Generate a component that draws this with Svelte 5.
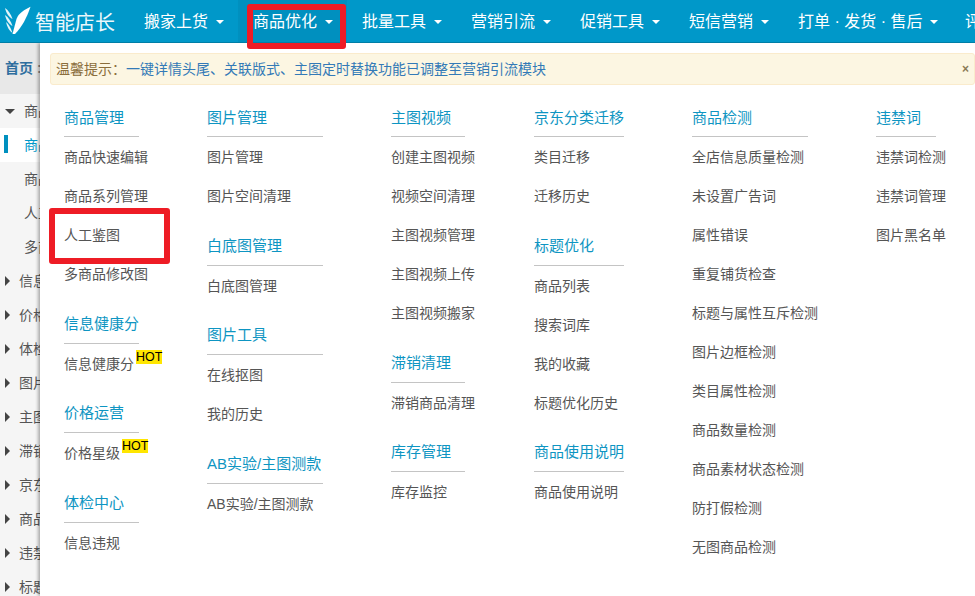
<script lang="ts">
  const navItems = ['搬家上货', '商品优化', '批量工具', '营销引流', '促销工具', '短信营销', '打单 · 发货 · 售后'];

  const sideTop = [
    { label: '商品优化', open: true, child: false },
    { label: '商品快速编辑', active: true, child: true },
    { label: '商品系列管理', child: true },
    { label: '人工鉴图', child: true },
    { label: '多商品修改图', child: true }
  ];
  const sideRest = ['信息健康分', '价格运营', '体检中心', '图片管理', '主图视频', '滞销清理', '京东分类迁移', '商品使用说明', '违禁词', '标题优化'];

  type Group = { title: string; items: (string | { name: string; hot: boolean })[] };
  // line: width of the rule under the titles, shared by the whole column
  const columns: { width: number; line: number; groups: Group[] }[] = [
    {
      width: 143,
      line: 75,
      groups: [
        { title: '商品管理', items: ['商品快速编辑', '商品系列管理', '人工鉴图', '多商品修改图'] },
        { title: '信息健康分', items: [{ name: '信息健康分', hot: true }] },
        { title: '价格运营', items: [{ name: '价格星级', hot: true }] },
        { title: '体检中心', items: ['信息违规'] }
      ]
    },
    {
      width: 184,
      line: 116,
      groups: [
        { title: '图片管理', items: ['图片管理', '图片空间清理'] },
        { title: '白底图管理', items: ['白底图管理'] },
        { title: '图片工具', items: ['在线抠图', '我的历史'] },
        { title: 'AB实验/主图测款', items: ['AB实验/主图测款'] }
      ]
    },
    {
      width: 143,
      line: 74,
      groups: [
        { title: '主图视频', items: ['创建主图视频', '视频空间清理', '主图视频管理', '主图视频上传', '主图视频搬家'] },
        { title: '滞销清理', items: ['滞销商品清理'] },
        { title: '库存管理', items: ['库存监控'] }
      ]
    },
    {
      width: 158,
      line: 90,
      groups: [
        { title: '京东分类迁移', items: ['类目迁移', '迁移历史'] },
        { title: '标题优化', items: ['商品列表', '搜索词库', '我的收藏', '标题优化历史'] },
        { title: '商品使用说明', items: ['商品使用说明'] }
      ]
    },
    {
      width: 184,
      line: 116,
      groups: [
        {
          title: '商品检测',
          items: ['全店信息质量检测', '未设置广告词', '属性错误', '重复铺货检查', '标题与属性互斥检测', '图片边框检测', '类目属性检测', '商品数量检测', '商品素材状态检测', '防打假检测', '无图商品检测']
        }
      ]
    },
    {
      width: 99,
      line: 60,
      groups: [{ title: '违禁词', items: ['违禁词检测', '违禁词管理', '图片黑名单'] }]
    }
  ];
</script>

<div class="page">
  <header class="navbar">
    <div class="brand">
      <svg class="logo" viewBox="0 0 34 43" width="34" height="43">
        <path d="M30.5 6.7 C24 10 18.5 13 16.5 19 L12.5 34 L15 34 C22 27 27 17 30.5 6.7 Z" fill="#fff" />
        <path d="M5 8 C8 10 11 14 12.5 19 C9 17 6 13 5 8 Z" fill="#e3f4f9" />
        <path d="M5 15 C8 17 11 21 12.5 26 C9 24 6 20 5 15 Z" fill="#e3f4f9" />
        <path d="M6 22 C8.5 24 11 28 12.5 33 C9.5 31 7 27 6 22 Z" fill="#e3f4f9" />
      </svg>
      <span class="brand-name">智能店长</span>
    </div>
    <nav class="nav">
      {#each navItems as item, i}
        <div class="nav-item" class:current={i === 1}>{item}<span class="caret"></span></div>
      {/each}
      <div class="nav-item">评价管理</div>
    </nav>
    <div class="mark mark-nav"></div>
  </header>

  <div class="body">
    <aside class="sidebar">
      <div class="crumb">首页<span class="sep">:</span></div>
      <ul class="side-list">
        {#each sideTop as row}
          <li class="side-row" class:child={row.child} class:active={row.active}>
            {#if row.open}<span class="tri-down"></span>{/if}
            {row.label}
          </li>
        {/each}
        {#each sideRest as label}
          <li class="side-row"><span class="tri-right"></span>{label}</li>
        {/each}
      </ul>
    </aside>

    <main class="panel">
      <div class="alert">
        <span><b>温馨提示：</b><a href="#top">一键详情头尾、关联版式、主图定时替换功能已调整至营销引流模块</a></span>
        <span class="close">×</span>
      </div>
      <div class="menu">
        {#each columns as col}
          <div class="col" style="width: {col.width}px">
            {#each col.groups as group}
              <section class="group">
                <h4 style="width: {col.line}px">{group.title}</h4>
                {#each group.items as item}
                  {#if typeof item === 'string'}
                    <div class="link">{item}</div>
                  {:else}
                    <div class="link">{item.name}<sup class="hot">HOT</sup></div>
                  {/if}
                {/each}
              </section>
            {/each}
          </div>
        {/each}
      </div>
      <div class="mark mark-menu"></div>
    </main>
  </div>
</div>

<style>
  :global(body) {
    margin: 0;
    overflow: hidden;
  }

  .page {
    width: 975px;
    height: 596px;
    overflow: hidden;
    position: relative;
    font-family: "Liberation Sans", "Noto Sans CJK SC", sans-serif;
    font-size: 14px;
    color: #555;
    background: #fff;
  }

  .navbar {
    display: flex;
    position: relative;
    z-index: 2;
    height: 43px;
    background: #0098c9;
    border-bottom: 1px solid #007ea6;
    box-sizing: border-box;
    color: #fff;
  }

  .brand {
    width: 129px;
    flex: none;
    display: flex;
    align-items: center;
    box-sizing: border-box;
  }

  .logo {
    flex: none;
  }

  .brand-name {
    font-size: 20px;
    margin-left: 1px;
    color: #eaf7fb;
  }

  .nav {
    display: flex;
    flex: none;
  }

  .nav-item {
    display: flex;
    align-items: center;
    padding: 2px 14px 0 15px;
    font-size: 16px;
    line-height: 40px;
    white-space: pre;
    width: 109px;
    box-sizing: border-box;
  }

  .nav-item:nth-child(7) {
    width: 167px;
    padding-right: 0;
  }

  .nav-item.current {
    background: #0090bf;
  }

  .caret {
    flex: none;
    margin-left: 8px;
    border-top: 4px solid #fff;
    border-left: 4px solid transparent;
    border-right: 4px solid transparent;
  }

  .body {
    display: flex;
    height: 553px;
  }

  .sidebar {
    width: 40px;
    flex: none;
    overflow: hidden;
    background: #f5f5f5;
  }

  .crumb {
    height: 51px;
    line-height: 50px;
    background: #e8e8e8;
    padding-left: 5px;
    color: #2f6f9f;
    font-weight: 700;
    white-space: nowrap;
  }

  .sep {
    margin-left: 4px;
    color: #888;
  }

  .side-list {
    list-style: none;
    margin: 0;
    padding: 0;
  }

  .side-row {
    height: 34px;
    line-height: 34px;
    white-space: nowrap;
    padding-left: 5px;
    display: flex;
    align-items: center;
    position: relative;
  }

  .side-row.child {
    padding-left: 24px;
  }

  .side-row.active {
    background: #fff;
    color: #0098c9;
  }

  .side-row.active::before {
    content: '';
    position: absolute;
    left: 4px;
    top: 7px;
    width: 4px;
    height: 18px;
    background: #0090bf;
  }

  .tri-down {
    flex: none;
    margin-right: 9px;
    border-top: 5px solid #444;
    border-left: 5px solid transparent;
    border-right: 5px solid transparent;
  }

  .tri-right {
    flex: none;
    margin-right: 9px;
    border-left: 5px solid #444;
    border-top: 5px solid transparent;
    border-bottom: 5px solid transparent;
  }

  .panel {
    flex: 1;
    position: relative;
    background: #fff;
    box-shadow: -2px 0 3px rgba(0, 0, 0, 0.3);
    padding: 10px 0 0 10px;
    box-sizing: border-box;
    min-width: 0;
  }

  .alert {
    display: flex;
    justify-content: space-between;
    align-items: center;
    height: 32px;
    padding: 0 5px;
    box-sizing: border-box;
    font-size: 14px;
    line-height: 28px;
    background: #fcf6e2;
    border: 1px solid #faebcc;
    border-radius: 3px;
    color: #8a6d3b;
  }

  .alert b {
    font-weight: 400;
  }

  .alert a {
    color: #337ab7;
    text-decoration: none;
  }

  .close {
    font-size: 12px;
    font-weight: 700;
    color: #8a7a55;
  }

  .menu {
    display: flex;
    padding: 13px 0 0 14px;
  }

  .col {
    flex: none;
  }

  .group + .group {
    margin-top: 11.5px;
  }

  h4 {
    margin: 0;
    height: 39px;
    line-height: 40px;
    box-sizing: border-box;
    font-size: 15px;
    font-weight: 400;
    color: #0e95c2;
    border-bottom: 1px solid #c4c4c4;
    white-space: nowrap;
  }

  .group + .group h4 {
    line-height: 38px;
  }

  .link {
    height: 39px;
    line-height: 41px;
    font-size: 14px;
    color: #555;
    white-space: nowrap;
  }

  .hot {
    font-size: 12.5px;
    line-height: 12.5px;
    color: #000;
    background: #ffe600;
    margin-left: 2px;
    vertical-align: 8px;
  }

  .mark {
    position: absolute;
    box-sizing: border-box;
    border: 6px solid #ee1c25;
    border-radius: 3px;
    pointer-events: none;
  }

  .mark-nav {
    left: 247px;
    top: 4px;
    width: 99px;
    height: 45px;
  }

  .mark-menu {
    left: 9px;
    top: 165px;
    width: 121px;
    height: 56px;
  }
</style>
